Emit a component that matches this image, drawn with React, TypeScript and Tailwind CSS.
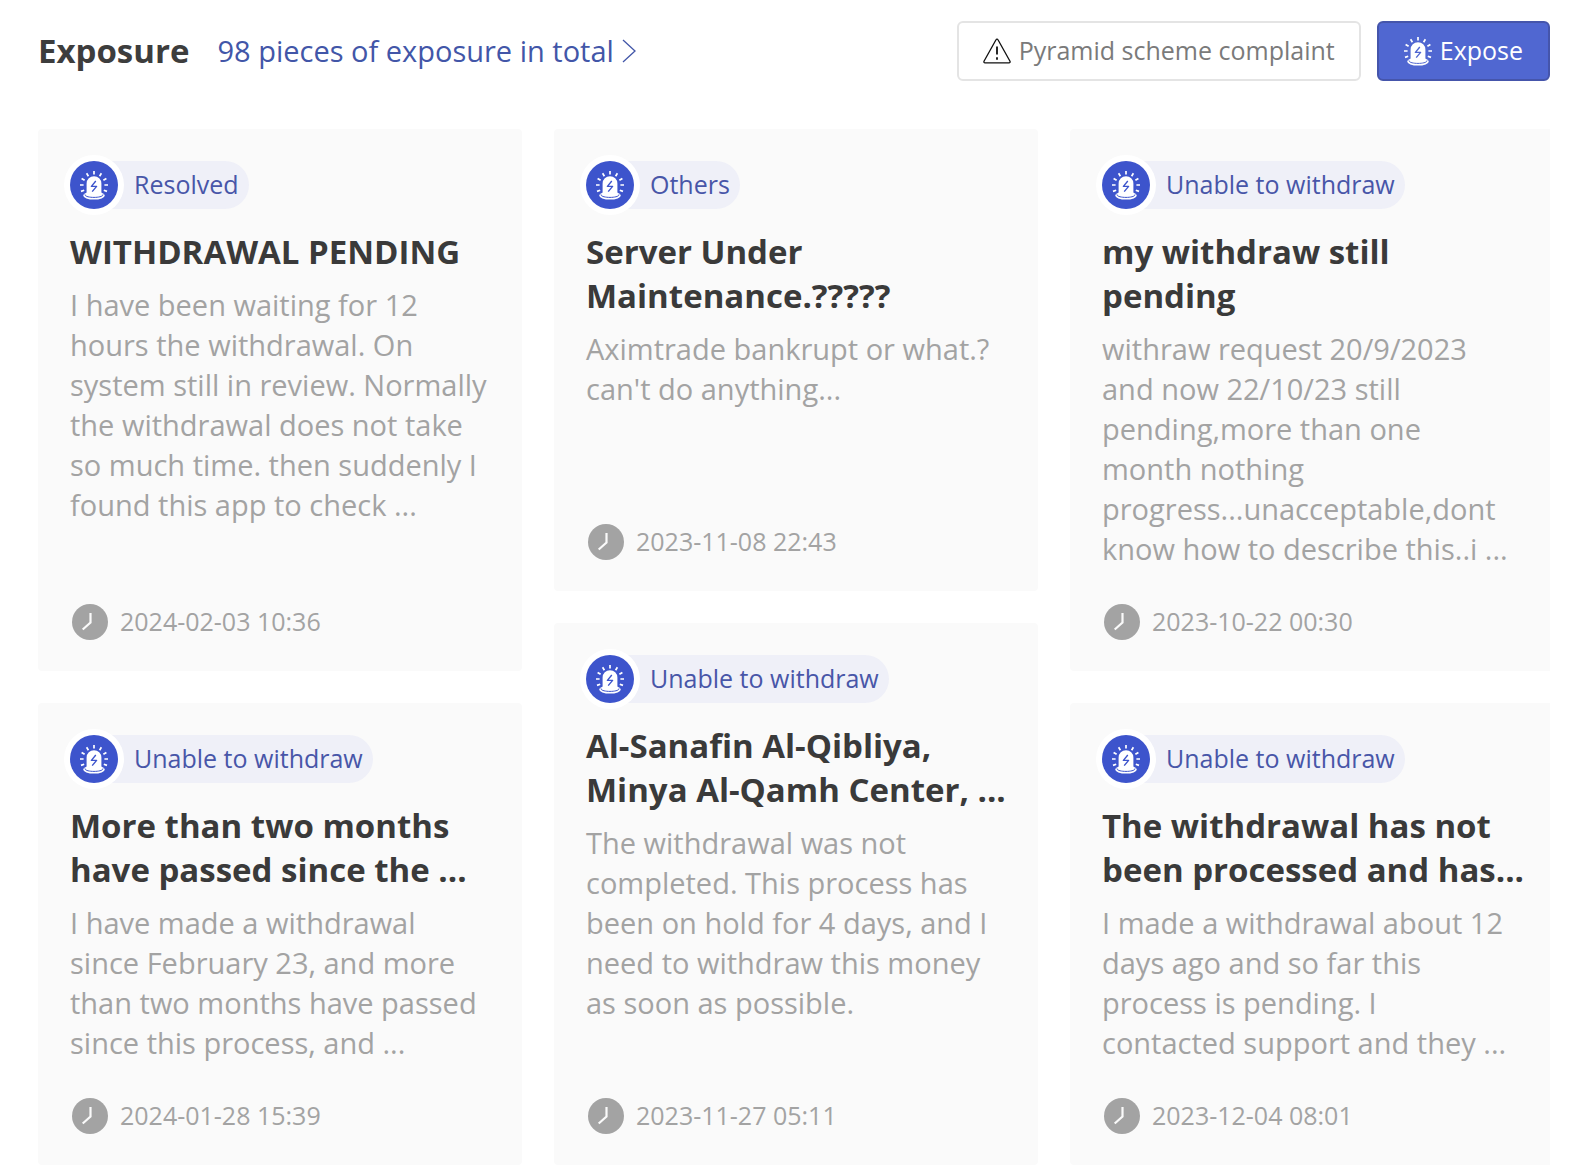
import clsx from "clsx";

interface Exposure {
  tag: string;
  title: string;
  body: string;
  date: string;
  size: "short" | "tall";
}

const columns: Exposure[][] = [
  [
    {
      tag: "Resolved",
      title: "WITHDRAWAL PENDING",
      body: "I have been waiting for 12\nhours the withdrawal. On\nsystem still in review. Normally\nthe withdrawal does not take\nso much time. then suddenly I\nfound this app to check ...",
      date: "2024-02-03 10:36",
      size: "tall",
    },
    {
      tag: "Unable to withdraw",
      title: "More than two months\nhave passed since the ...",
      body: "I have made a withdrawal\nsince February 23, and more\nthan two months have passed\nsince this process, and ...",
      date: "2024-01-28 15:39",
      size: "short",
    },
  ],
  [
    {
      tag: "Others",
      title: "Server Under\nMaintenance.?????",
      body: "Aximtrade bankrupt or what.?\ncan't do anything...",
      date: "2023-11-08 22:43",
      size: "short",
    },
    {
      tag: "Unable to withdraw",
      title: "Al-Sanafin Al-Qibliya,\nMinya Al-Qamh Center, ...",
      body: "The withdrawal was not\ncompleted. This process has\nbeen on hold for 4 days, and I\nneed to withdraw this money\nas soon as possible.",
      date: "2023-11-27 05:11",
      size: "tall",
    },
  ],
  [
    {
      tag: "Unable to withdraw",
      title: "my withdraw still\npending",
      body: "withraw request 20/9/2023\nand now 22/10/23 still\npending,more than one\nmonth nothing\nprogress...unacceptable,dont\nknow how to describe this..i ...",
      date: "2023-10-22 00:30",
      size: "tall",
    },
    {
      tag: "Unable to withdraw",
      title: "The withdrawal has not\nbeen processed and has...",
      body: "I made a withdrawal about 12\ndays ago and so far this\nprocess is pending. I\ncontacted support and they ...",
      date: "2023-12-04 08:01",
      size: "short",
    },
  ],
];

function BeaconIcon({ className = "" }: { className?: string }) {
  return (
    <svg viewBox="0 0 28 29" fill="none" className={className} aria-hidden="true">
      <path
        d="M14 0v3.4M6.6 2.2l1.8 3M21.4 2.2l-1.8 3M1.6 7.4l3 1.8M26.4 7.4l-3 1.8M0 14h3.6M28 14h-3.6M1 20.4l3.2-1.2M27 20.4l-3.2-1.2"
        stroke="white"
        strokeWidth="1.7"
      />
      <ellipse cx="14" cy="24.6" rx="10.8" ry="4" fill="white" />
      <path d="M6.6 24V12.6a7.4 7.4 0 0 1 14.8 0V24c-2 2.4-12.8 2.4-14.8 0Z" fill="white" />
      <path d="M5 23.4c-.8 4 18.8 4 18 0" stroke="currentColor" strokeWidth="1" />
      <path d="M15.8 10l-4.4 5.4h5.2l-4.4 5.200" stroke="currentColor" strokeWidth="1.4" strokeLinejoin="round" />
    </svg>
  );
}

function WarningIcon() {
  return (
    <svg viewBox="0 0 28 26" fill="none" stroke="#111" strokeWidth="1.3" className="h-[26px] w-7" aria-hidden="true">
      <path d="M13 1.7a1.1 1.1 0 0 1 2 0l12 21.5a1.1 1.1 0 0 1-1 1.6H2a1.1 1.1 0 0 1-1-1.6Z" />
      <path d="M14 8.5v8M14 19.2v2.6" strokeWidth="1.8" />
    </svg>
  );
}

function ClockIcon() {
  return (
    <svg viewBox="0 0 36 36" fill="none" className="size-9" aria-hidden="true">
      <circle cx="18" cy="18" r="18" fill="#a3a3a3" />
      <path d="M18.5 9v9.5l-7.8 7" stroke="#fafafa" strokeWidth="2.2" />
    </svg>
  );
}

function ExposureCard({ tag, title, body, date, size }: Exposure) {
  return (
    <article
      className={clsx(
        "flex flex-col rounded bg-[#fafafa] px-8 pt-8 pb-[29px]",
        size === "tall" ? "min-h-[542px]" : "min-h-[462px]"
      )}
    >
      <div className="flex h-12 items-center self-start rounded-full bg-[#eff0f8] pr-2.5">
        <span className="flex size-12 items-center justify-center rounded-full bg-[#3d54cc] text-[#3d54cc] ring-6 ring-white">
          <BeaconIcon className="h-[29px] w-7" />
        </span>
        <span className="pl-4 text-[25px] text-[#4856a8]">{tag}</span>
      </div>
      <h3 className="mt-[21px] text-[33px] leading-[44px] font-bold whitespace-pre text-[#3a3a3a]">{title}</h3>
      <p className="mt-[11px] text-[29px] leading-10 whitespace-pre text-[#a3a3a3]">{body}</p>
      <div className="mt-auto flex h-10 items-center gap-3 pl-0.5 text-[25px] text-[#a3a3a3]">
        <ClockIcon />
        <time>{date}</time>
      </div>
    </article>
  );
}

export default function App() {
  return (
    <main className="min-h-screen bg-white px-8 pt-[21px] pb-2 font-['Open_Sans','Noto_Sans',sans-serif]">
      <div className="ml-1.5 overflow-hidden">
        <header className="flex items-center justify-between">
          <div className="flex items-center gap-7">
            <h2 className="text-[33px] font-bold text-[#3d3d3d]">Exposure</h2>
            <a href="#all" className="flex items-center gap-2 text-[29px] text-[#4256a8]">
              98 pieces of exposure in total
              <svg viewBox="0 0 14 24" fill="none" stroke="currentColor" strokeWidth="1.3" className="h-6 w-3.5" aria-hidden="true">
                <path d="M1 1l12 11L1 23" />
              </svg>
            </a>
          </div>
          <div className="flex gap-4 text-[25px]">
            <button className="flex h-15 items-center gap-2 rounded-md border-2 border-[#e4e4e4] px-6 text-[#7a7a7a]">
              <WarningIcon />
              Pyramid scheme complaint
            </button>
            <button className="flex h-15 items-center gap-2 rounded-md border-2 border-[#4555ab] bg-[#5067d1] px-[25px] text-white">
              <BeaconIcon className="h-[29px] w-7 text-[#5067d1]" />
              Expose
            </button>
          </div>
        </header>
        <section className="mt-12 -mr-1 grid grid-cols-3 gap-8">
          {columns.map((cards, i) => (
            <div key={i} className="flex flex-col gap-8">
              {cards.map((card) => (
                <ExposureCard key={card.date} {...card} />
              ))}
            </div>
          ))}
        </section>
      </div>
    </main>
  );
}
